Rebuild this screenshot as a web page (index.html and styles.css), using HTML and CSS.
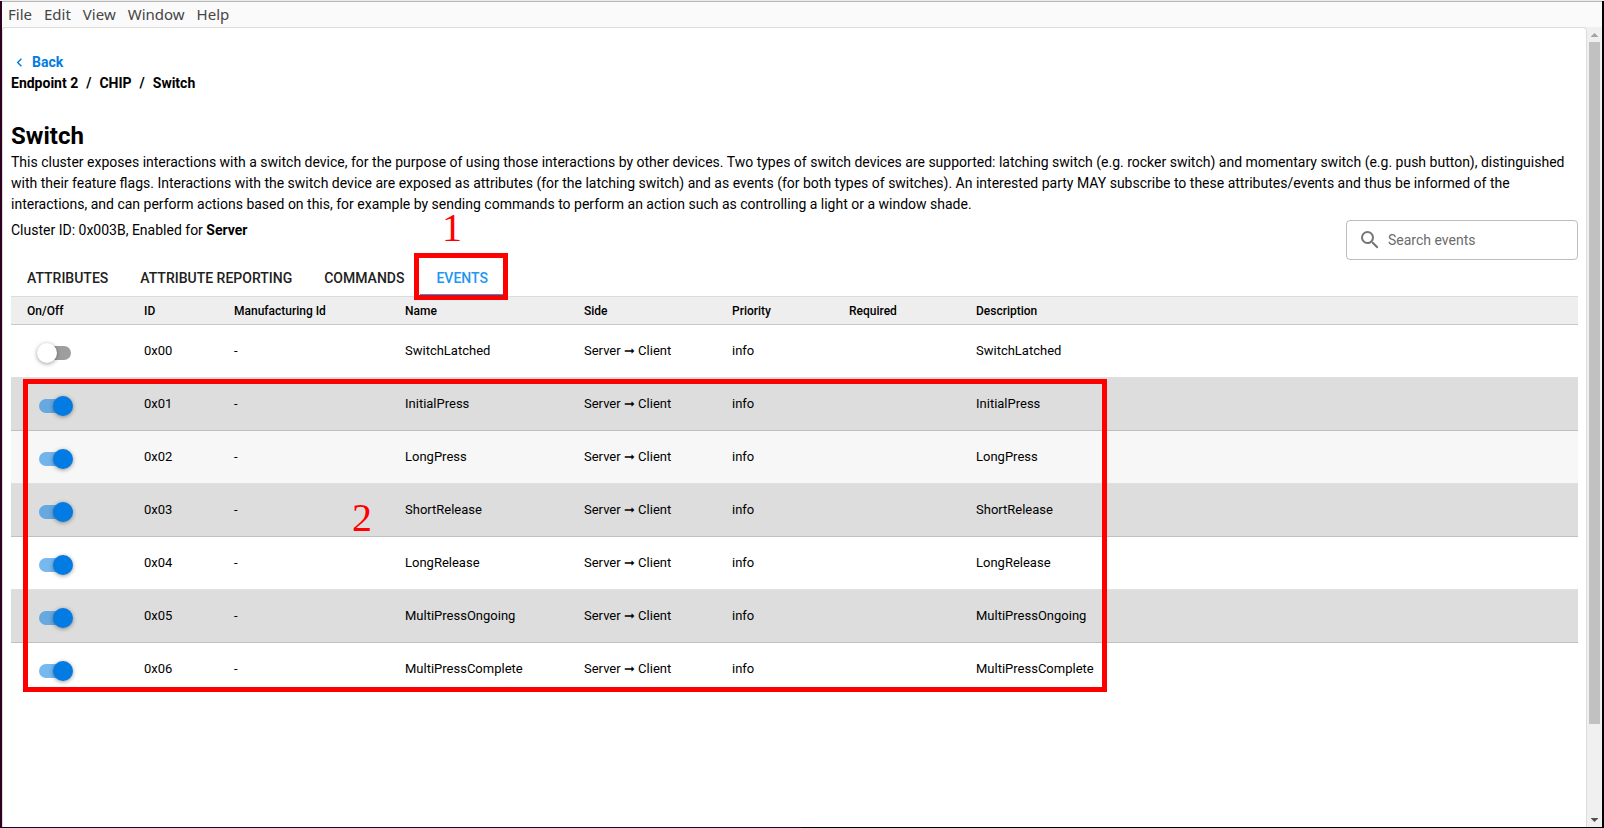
FILE: index.html
```html
<!DOCTYPE html>
<html lang="en">
<head>
<meta charset="utf-8">
<title>Switch cluster</title>
<link rel="stylesheet" href="styles.css">
</head>
<body>
<div class="window">
  <nav class="menubar" aria-label="Application menu">
    <button class="menu-item">File</button>
    <button class="menu-item">Edit</button>
    <button class="menu-item">View</button>
    <button class="menu-item">Window</button>
    <button class="menu-item">Help</button>
  </nav>
  <div class="body">
    <main class="panel">
      <a class="back" href="#"><svg class="back-icon" viewBox="0 0 24 24" aria-hidden="true"><path d="M15.4 7.4 14 6l-6 6 6 6 1.4-1.4L10.800 12z"/></svg>Back</a>
      <nav class="crumbs" aria-label="Breadcrumb"><span>Endpoint 2</span><span>/</span><span>CHIP</span><span>/</span><span>Switch</span></nav>
      <h1 class="title">Switch</h1>
      <p class="description">This cluster exposes interactions with a switch device, for the purpose of using those interactions by other devices. Two types of switch devices are supported: latching switch (e.g. rocker switch) and momentary switch (e.g. push button), distinguished with their feature flags. Interactions with the switch device are exposed as attributes (for the latching switch) and as events (for both types of switches). An interested party MAY subscribe to these attributes/events and thus be informed of the interactions, and can perform actions based on this, for example by sending commands to perform an action such as controlling a light or a window shade.</p>
      <div class="info-row">
        <p class="cluster-id">Cluster ID: 0x003B, Enabled for <strong>Server</strong></p>
        <label class="search">
          <svg class="search-icon" viewBox="0 0 24 24" aria-hidden="true"><path d="M15.5 14h-.79l-.28-.27A6.471 6.471 0 0 0 16 9.500 6.500 6.500 0 1 0 9.500 16c1.610 0 3.090-.59 4.230-1.570l.27.28v.79l5 4.990L20.490 19l-4.990-5zm-6 0C7.010 14 5 11.990 5 9.500S7.010 5 9.500 5 14 7.010 14 9.500 11.990 14 9.500 14z"/></svg>
          <input class="search-input" type="text" placeholder="Search events" aria-label="Search events">
        </label>
      </div>
      <div class="tabs" role="tablist">
        <button class="tab" role="tab">ATTRIBUTES</button>
        <button class="tab" role="tab">ATTRIBUTE REPORTING</button>
        <button class="tab" role="tab">COMMANDS</button>
        <button class="tab tab-active" role="tab" aria-selected="true">EVENTS</button>
        <div class="mark mark-tab"></div>
        <span class="number number-one">1</span>
      </div>
      <div class="table-wrap">
        <table class="events">
          <colgroup><col class="c-toggle"><col class="c-id"><col class="c-mfg"><col class="c-name"><col class="c-side"><col class="c-priority"><col class="c-required"><col></colgroup>
          <thead>
            <tr><th>On/Off</th><th>ID</th><th>Manufacturing Id</th><th>Name</th><th>Side</th><th>Priority</th><th>Required</th><th>Description</th></tr>
          </thead>
          <tbody>
            <tr><td><input class="toggle" type="checkbox" aria-label="SwitchLatched"></td><td>0x00</td><td>-</td><td>SwitchLatched</td><td>Server ➞ Client</td><td>info</td><td></td><td>SwitchLatched</td></tr>
            <tr class="shaded"><td><input class="toggle" type="checkbox" aria-label="InitialPress" checked></td><td>0x01</td><td>-</td><td>InitialPress</td><td>Server ➞ Client</td><td>info</td><td></td><td>InitialPress</td></tr>
            <tr class="hovered"><td><input class="toggle" type="checkbox" aria-label="LongPress" checked></td><td>0x02</td><td>-</td><td>LongPress</td><td>Server ➞ Client</td><td>info</td><td></td><td>LongPress</td></tr>
            <tr class="shaded"><td><input class="toggle" type="checkbox" aria-label="ShortRelease" checked></td><td>0x03</td><td>-</td><td>ShortRelease</td><td>Server ➞ Client</td><td>info</td><td></td><td>ShortRelease</td></tr>
            <tr><td><input class="toggle" type="checkbox" aria-label="LongRelease" checked></td><td>0x04</td><td>-</td><td>LongRelease</td><td>Server ➞ Client</td><td>info</td><td></td><td>LongRelease</td></tr>
            <tr class="shaded"><td><input class="toggle" type="checkbox" aria-label="MultiPressOngoing" checked></td><td>0x05</td><td>-</td><td>MultiPressOngoing</td><td>Server ➞ Client</td><td>info</td><td></td><td>MultiPressOngoing</td></tr>
            <tr><td><input class="toggle" type="checkbox" aria-label="MultiPressComplete" checked></td><td>0x06</td><td>-</td><td>MultiPressComplete</td><td>Server ➞ Client</td><td>info</td><td></td><td>MultiPressComplete</td></tr>
          </tbody>
        </table>
        <div class="mark mark-rows"></div>
        <span class="number number-two">2</span>
      </div>
    </main>
    <div class="scrollbar" aria-hidden="true">
      <div class="arrow arrow-up"></div>
      <div class="track"><div class="thumb"></div></div>
      <div class="arrow arrow-down"></div>
    </div>
  </div>
</div>
</body>
</html>
```
FILE: styles.css
```css
* { box-sizing: border-box; }
body {
  margin: 0;
  background: linear-gradient(90deg, #2c001e 50%, #000 50%);
  color: #000;
  font-family: Roboto, "Liberation Sans", sans-serif;
  font-size: 14px;
  line-height: 21px;
}
button { border: 0; background: none; font: inherit; cursor: pointer; }
h1, p { margin: 0; }

.window {
  display: flex;
  flex-direction: column;
  height: 100vh;
  padding: 0 2px 1px;
  border-top: 1px solid #ebebeb;
}
.menubar {
  display: flex;
  gap: 12px;
  height: 26px;
  flex: none;
  padding: 0 6px;
  align-items: center;
  background: #fafafa;
  border-top: 1px solid #b8b8b8;
}
.menu-item {
  padding: 0;
  color: #454545;
  font-family: "Noto Sans", sans-serif;
  font-size: 15px;
}
.body {
  display: flex;
  flex: 1;
  min-height: 0;
  background: #f0f0f0;
}
.panel {
  flex: 1;
  min-width: 0;
  padding: 24px 8px 0;
  overflow: hidden;
  background: #fff;
  border: 1px solid #dcdcdc;
  border-bottom: 0;
  border-radius: 4px 4px 0 0;
}

.back {
  display: flex;
  align-items: center;
  width: max-content;
  color: #027be3;
  font-weight: 700;
  text-decoration: none;
}
.back-icon { width: 17px; height: 17px; margin-right: 4px; fill: currentColor; }
.crumbs { display: flex; gap: 8px; font-weight: 700; }
.title { margin-top: 26px; font-size: 24px; line-height: 32px; font-weight: 700; }

.info-row {
  display: flex;
  justify-content: space-between;
  margin-top: 5px;
}
.search {
  display: flex;
  align-items: center;
  gap: 6px;
  width: 232px;
  height: 40px;
  padding: 0 11px;
  border: 1px solid #bdbdbd;
  border-radius: 4px;
}
.search-icon { flex: none; width: 24px; height: 24px; fill: #757575; }
.search-input {
  flex: 1;
  min-width: 0;
  padding: 0;
  border: 0;
  outline: 0;
  background: none;
  font: inherit;
}
.search-input::placeholder { color: #6b6b6b; opacity: 1; }

.tabs { position: relative; z-index: 1; display: flex; }
.tab {
  height: 36px;
  padding: 2px 16px 0;
  border-bottom: 2px solid transparent;
  color: #212121;
  font-weight: 500;
}
.tab-active { color: #2196f3; border-bottom-color: #2196f3; }

.table-wrap { position: relative; border-top: 1px solid #dcdcdc; }
.events {
  width: 100%;
  table-layout: fixed;
  border-collapse: separate;
  border-spacing: 0;
  font-size: 13px;
}
.c-toggle, .c-priority { width: 117px; }
.c-id { width: 90px; }
.c-mfg { width: 171px; }
.c-name { width: 179px; }
.c-side { width: 148px; }
.c-required { width: 127px; }
.events th {
  height: 28px;
  padding: 0 16px;
  background: #eee;
  border-bottom: 1px solid #c8c8c8;
  font-size: 12px;
  line-height: 18px;
  font-weight: 500;
  text-align: left;
}
.events td {
  height: 53px;
  padding: 0 16px 2px;
  border-bottom: 1px solid #e0e0e0;
}
.events .shaded td { background: #ddd; border-bottom-color: #c0c0c0; }
.events .hovered td { background: #f7f7f7; }
.events tbody tr:last-child td { border-bottom-color: transparent; }

.toggle {
  appearance: none;
  position: relative;
  display: block;
  width: 32px;
  height: 14px;
  margin: 6px 0 0 12px;
  border-radius: 7px;
  background: #9e9e9e;
}
.toggle::before {
  content: "";
  position: absolute;
  top: -3px;
  left: -2px;
  width: 20px;
  height: 20px;
  border-radius: 50%;
  background: #fff;
  box-shadow: 0 1px 4px rgba(0, 0, 0, 0.4);
}
.toggle:checked { background: rgba(2, 123, 227, 0.54); }
.toggle:checked::before { left: 14px; background: #027be3; }

.mark { position: absolute; border: 5px solid #f00; pointer-events: none; }
.mark-tab { left: 403px; top: -7px; width: 94px; height: 47px; }
.mark-rows { left: 12px; top: 82px; width: 1084px; height: 313px; }
.number {
  position: absolute;
  color: #f00;
  font-family: "Liberation Serif", serif;
  font-size: 40px;
  line-height: 28px;
}
.number-one { left: 431px; top: -46px; }
.number-two { left: 341px; top: 207px; }

.scrollbar {
  display: flex;
  flex-direction: column;
  width: 15px;
  flex: none;
  padding: 0 2px;
  align-items: center;
}
.arrow { width: 8px; height: 4px; margin: 6px 0 5px; flex: none; }
.arrow-up { background: #a3a3a3; clip-path: polygon(50% 0, 100% 100%, 0 100%); }
.arrow-down { background: #505050; clip-path: polygon(0 0, 100% 0, 50% 100%); }
.track { flex: 1; width: 11px; }
.thumb { height: 88.6%; background: #c1c1c1; }
```
